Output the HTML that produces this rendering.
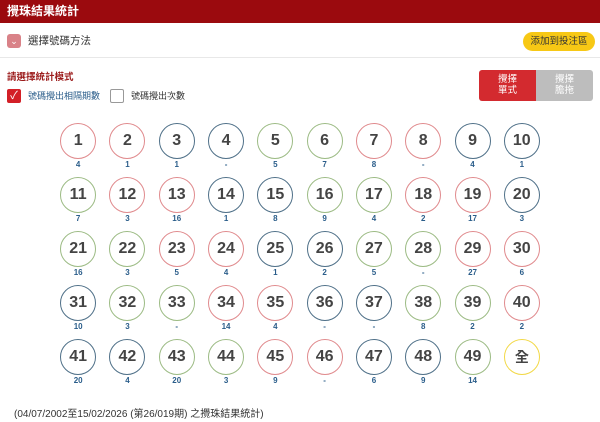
<!DOCTYPE html>
<html><head><meta charset="utf-8"><style>
*{margin:0;padding:0;box-sizing:border-box}
body{width:600px;height:422px;overflow:hidden;background:#fff;font-family:"Liberation Sans","Noto Sans CJK TC",sans-serif;position:relative}
.hdr{position:absolute;left:0;top:0;width:600px;height:23px;background:#9b0a0e;color:#fff;font-size:12px;font-weight:bold;line-height:23px;padding-left:7px}
.sel{position:absolute;left:7px;top:34px;width:14px;height:14px;background:#d98288;border-radius:3px;color:#fff;font-size:9px;text-align:center;line-height:14px}
.selt{position:absolute;left:28px;top:34px;font-size:10.5px;color:#333;line-height:15px}
.add{position:absolute;left:523px;top:32px;width:72px;height:19px;background:#f7c815;border-radius:10px;font-size:9.5px;color:#333;text-align:center;line-height:19px}
.line{position:absolute;left:0;top:57px;width:600px;height:1px;background:#e8e8e8}
.mode{position:absolute;left:7px;top:69px;font-size:9.5px;color:#9b1a1a;font-weight:bold}
.cb{position:absolute;top:89px;width:14px;height:14px;border:1px solid #999;border-radius:2px}
.cb.on{background:#d32027;border-color:#d32027;color:#fff;font-size:11px;text-align:center;line-height:13px}
.cbt{position:absolute;top:89px;font-size:9px;line-height:14px}
.btns{position:absolute;left:479px;top:70px;width:114px;height:31px;border-radius:3px;overflow:hidden;display:flex}
.btns div{width:57px;height:31px;color:#fff;font-size:9.5px;text-align:center;line-height:11px;padding-top:4px}
.grid{position:absolute;left:53.5px;top:123px;display:grid;grid-template-columns:repeat(10,49.3px);grid-auto-rows:54px}
.c{position:relative;text-align:center}
.b{width:36px;height:36px;margin:0 auto;border-radius:50%;border:1px solid;font-size:16px;font-weight:bold;color:#444;line-height:34px}
.r{border-color:#e08a8d}.u{border-color:#4f7088}.g{border-color:#9cbb84}.y{border-color:#f2d846}
.n{font-size:8px;color:#2a5d8a;font-weight:bold;line-height:10px;margin-top:1px}
.foot{position:absolute;left:14px;top:405px;font-size:10px;color:#333}
</style></head><body>
<div class="hdr">攪珠結果統計</div>
<div class="sel">&#8964;</div><div class="selt">選擇號碼方法</div>
<div class="add">添加到投注區</div>
<div class="line"></div>
<div class="mode">請選擇統計模式</div>
<div class="cb on" style="left:7px">✓</div><div class="cbt" style="left:28px;color:#2a5d8a">號碼攪出相隔期數</div>
<div class="cb" style="left:110px"></div><div class="cbt" style="left:131px;color:#333">號碼攪出次數</div>
<div class="btns"><div style="background:#d32a2f">攪擇<br>單式</div><div style="background:#bdbdbd">攪擇<br>膽拖</div></div>
<div class="grid">
<div class="c"><div class="b r">1</div><div class="n">4</div></div>
<div class="c"><div class="b r">2</div><div class="n">1</div></div>
<div class="c"><div class="b u">3</div><div class="n">1</div></div>
<div class="c"><div class="b u">4</div><div class="n">-</div></div>
<div class="c"><div class="b g">5</div><div class="n">5</div></div>
<div class="c"><div class="b g">6</div><div class="n">7</div></div>
<div class="c"><div class="b r">7</div><div class="n">8</div></div>
<div class="c"><div class="b r">8</div><div class="n">-</div></div>
<div class="c"><div class="b u">9</div><div class="n">4</div></div>
<div class="c"><div class="b u">10</div><div class="n">1</div></div>
<div class="c"><div class="b g">11</div><div class="n">7</div></div>
<div class="c"><div class="b r">12</div><div class="n">3</div></div>
<div class="c"><div class="b r">13</div><div class="n">16</div></div>
<div class="c"><div class="b u">14</div><div class="n">1</div></div>
<div class="c"><div class="b u">15</div><div class="n">8</div></div>
<div class="c"><div class="b g">16</div><div class="n">9</div></div>
<div class="c"><div class="b g">17</div><div class="n">4</div></div>
<div class="c"><div class="b r">18</div><div class="n">2</div></div>
<div class="c"><div class="b r">19</div><div class="n">17</div></div>
<div class="c"><div class="b u">20</div><div class="n">3</div></div>
<div class="c"><div class="b g">21</div><div class="n">16</div></div>
<div class="c"><div class="b g">22</div><div class="n">3</div></div>
<div class="c"><div class="b r">23</div><div class="n">5</div></div>
<div class="c"><div class="b r">24</div><div class="n">4</div></div>
<div class="c"><div class="b u">25</div><div class="n">1</div></div>
<div class="c"><div class="b u">26</div><div class="n">2</div></div>
<div class="c"><div class="b g">27</div><div class="n">5</div></div>
<div class="c"><div class="b g">28</div><div class="n">-</div></div>
<div class="c"><div class="b r">29</div><div class="n">27</div></div>
<div class="c"><div class="b r">30</div><div class="n">6</div></div>
<div class="c"><div class="b u">31</div><div class="n">10</div></div>
<div class="c"><div class="b g">32</div><div class="n">3</div></div>
<div class="c"><div class="b g">33</div><div class="n">-</div></div>
<div class="c"><div class="b r">34</div><div class="n">14</div></div>
<div class="c"><div class="b r">35</div><div class="n">4</div></div>
<div class="c"><div class="b u">36</div><div class="n">-</div></div>
<div class="c"><div class="b u">37</div><div class="n">-</div></div>
<div class="c"><div class="b g">38</div><div class="n">8</div></div>
<div class="c"><div class="b g">39</div><div class="n">2</div></div>
<div class="c"><div class="b r">40</div><div class="n">2</div></div>
<div class="c"><div class="b u">41</div><div class="n">20</div></div>
<div class="c"><div class="b u">42</div><div class="n">4</div></div>
<div class="c"><div class="b g">43</div><div class="n">20</div></div>
<div class="c"><div class="b g">44</div><div class="n">3</div></div>
<div class="c"><div class="b r">45</div><div class="n">9</div></div>
<div class="c"><div class="b r">46</div><div class="n">-</div></div>
<div class="c"><div class="b u">47</div><div class="n">6</div></div>
<div class="c"><div class="b u">48</div><div class="n">9</div></div>
<div class="c"><div class="b g">49</div><div class="n">14</div></div>
<div class="c"><div class="b y" style="font-size:14px">全</div></div>
</div>
<div class="foot">(04/07/2002至15/02/2026 (第26/019期) 之攪珠結果統計)</div>
</body></html>
